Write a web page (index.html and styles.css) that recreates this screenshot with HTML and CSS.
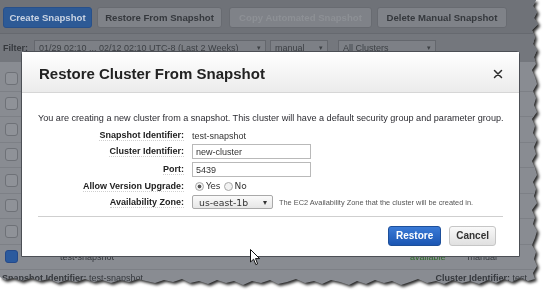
FILE: index.html
```html
<!DOCTYPE html>
<html lang="en">
<head>
    <meta charset="UTF-8">
    <title>Restore Cluster From Snapshot</title>
    <link rel="stylesheet" href="styles.css">
</head>
<body>
    <div class="shot">
        <div class="page">
            <div class="toolbar">
                <span class="btn btn-primary btn-create">Create Snapshot</span>
                <span class="btn btn-restore">Restore From Snapshot</span>
                <span class="btn btn-disabled btn-copy">Copy Automated Snapshot</span>
                <span class="btn btn-delete">Delete Manual Snapshot</span>
            </div>
            <div class="filters">
                <b>Filter:</b>
                <span class="fsel fsel-range">01/29 02:10 ... 02/12 02:10 UTC-8 (Last 2 Weeks) <i>▾</i></span>
                <span class="fsel fsel-type">manual <i>▾</i></span>
                <span class="fsel fsel-cluster">All Clusters <i>▾</i></span>
            </div>
            <div class="rows">
                <div class="row"><span class="check"></span></div>
                <div class="row"><span class="check"></span></div>
                <div class="row"><span class="check"></span></div>
                <div class="row"><span class="check"></span></div>
                <div class="row"><span class="check"></span></div>
                <div class="row"><span class="check"></span></div>
                <div class="row"><span class="check"></span></div>
                <div class="row selected">
                    <span class="check"></span>
                    <span class="cell-id">test-snapshot</span>
                    <span class="cell-status">available</span>
                    <span class="cell-type">manual</span>
                </div>
                <div class="details">
                    <span><b>Snapshot Identifier:</b> test-snapshot</span>
                    <span><b>Cluster Identifier:</b> test</span>
                </div>
            </div>

            <div class="modal">
                <div class="modal-head">
                    <h1>Restore Cluster From Snapshot</h1>
                    <svg class="close" width="10" height="10" viewBox="0 0 10 10">
                        <path d="M1.5 1.5 L8.5 8.5 M8.5 1.5 L1.5 8.5" stroke="#2b2b2b" stroke-width="1.5" stroke-linecap="round"/>
                    </svg>
                </div>
                <div class="modal-body">
                    <p class="intro">You are creating a new cluster from a snapshot. This cluster will have a default security group and parameter group.</p>
                    <div class="form">
                        <span class="label">Snapshot Identifier:</span>
                        <span class="value">test-snapshot</span>

                        <span class="label">Cluster Identifier:</span>
                        <span class="value"><span class="input">new-cluster</span></span>

                        <span class="label">Port:</span>
                        <span class="value"><span class="input">5439</span></span>

                        <span class="label">Allow Version Upgrade:</span>
                        <span class="value radios">
                            <span class="radio on"></span>Yes
                            <span class="radio"></span>No
                        </span>

                        <span class="label">Availability Zone:</span>
                        <span class="value zone">
                            <span class="select">us-east-1b <i>▾</i></span>
                            <span class="help">The EC2 Availability Zone that the cluster will be created in.</span>
                        </span>
                    </div>
                    <div class="actions">
                        <span class="mbtn mbtn-blue">Restore</span>
                        <span class="mbtn">Cancel</span>
                    </div>
                </div>
            </div>

            <svg class="cursor" width="11" height="17" viewBox="0 0 11 17">
                <path d="M0.5 0.5 L0.5 13 L3.6 10.2 L5.8 15.6 L7.6 14.8 L5.5 9.6 L9.6 9.6 Z" fill="#fff" stroke="#111" stroke-width="1"/>
            </svg>
        </div>
    </div>
</body>
</html>
```

FILE: styles.css
```css
body {
    margin: 0;
    background: #fff;
    font-family: "Liberation Sans", Arial, sans-serif;
}

/* torn-paper screenshot */
.shot {
    width: 545px;
    height: 293px;
    filter: drop-shadow(2px 2px 1.5px rgba(0, 0, 0, 0.85));
}

.page {
    position: relative;
    width: 540px;
    height: 288px;
    background: #898c92;
    overflow: hidden;
    clip-path: polygon(0 0, 536px 0, 533px 6px, 537px 12px, 534px 18px, 538px 24px, 532px 30px,
        535px 37px, 533px 44px, 537px 50px, 534px 57px, 536px 64px, 532px 70px, 535px 77px,
        537px 84px, 533px 91px, 536px 98px, 534px 105px, 537px 112px, 532px 119px, 535px 126px,
        533px 133px, 537px 140px, 534px 147px, 536px 154px, 532px 161px, 535px 168px, 537px 175px,
        533px 182px, 536px 189px, 534px 196px, 537px 203px, 532px 210px, 535px 217px, 533px 224px,
        537px 231px, 535px 238px, 532px 245px, 536px 252px, 534px 259px, 537px 266px, 533px 273px,
        535px 279px, 528px 281px, 520px 278px, 512px 282px, 504px 279px, 496px 283px, 488px 280px,
        479px 284px, 470px 281px, 462px 283px, 453px 280px, 444px 284px, 436px 281px, 427px 283px,
        418px 279px, 410px 282px, 401px 285px, 392px 281px, 384px 283px, 375px 280px, 366px 284px,
        357px 281px, 349px 285px, 340px 282px, 331px 280px, 322px 284px, 314px 281px, 305px 283px,
        296px 279px, 287px 282px, 278px 284px, 270px 280px, 261px 283px, 252px 281px, 243px 285px,
        234px 281px, 226px 283px, 217px 280px, 208px 284px, 199px 281px, 190px 283px, 182px 279px,
        173px 282px, 164px 280px, 155px 283px, 146px 281px, 138px 279px, 129px 282px, 120px 280px,
        111px 283px, 102px 280px, 94px 282px, 85px 279px, 76px 282px, 67px 280px, 58px 283px,
        49px 279px, 40px 281px, 31px 278px, 22px 281px, 13px 278px, 5px 280px, 0 277px);
}

.toolbar {
    display: flex;
    height: 34px;
    padding: 7px 3px 0;
    box-sizing: border-box;
    background: #6f7278;
    border-bottom: 1px solid #66696f;
}

.btn {
    height: 21px;
    line-height: 20px;
    border: 1px solid #686b71;
    border-radius: 3px;
    box-sizing: border-box;
    background: #7f8288;
    color: #35383d;
    font-size: 9.6px;
    font-weight: bold;
    text-align: center;
    white-space: nowrap;
}

.btn-create { width: 89px; }
.btn-restore { width: 125px; margin-left: 5px; }
.btn-copy { width: 143px; margin-left: 7px; }
.btn-delete { width: 130px; margin-left: 5px; }

.btn-primary {
    background: #2d5a96;
    border-color: #28508a;
    color: #c9d3e2;
}

.btn-disabled {
    color: #8d9095;
}

.filters {
    display: flex;
    align-items: center;
    gap: 4px;
    height: 28px;
    padding: 0 3px;
    background: #74777d;
    color: #35383d;
    font-size: 9px;
}

.filters b {
    margin-right: 2px;
}

.fsel {
    display: flex;
    justify-content: space-between;
    height: 14px;
    line-height: 14px;
    padding: 0 4px;
    border: 1px solid #64676d;
    background: #7d8086;
    color: #3d4045;
    font-size: 9px;
    white-space: nowrap;
}

.fsel i {
    font-style: normal;
    font-size: 7px;
}

.fsel-range { width: 222px; }
.fsel-type { width: 48px; }
.fsel-cluster { width: 88px; margin-left: 6px; }

.rows {
    padding-top: 4px;
}

.row {
    position: relative;
    display: flex;
    align-items: center;
    height: 25.5px;
    padding-left: 5px;
    border-bottom: 1px solid #7d8086;
    box-sizing: border-box;
    font-size: 9px;
    color: #35383d;
}

.check {
    width: 11px;
    height: 11px;
    border: 1px solid #6e7177;
    border-radius: 3px;
    background: #8f9298;
}

.selected .check {
    background: #2b5a9e;
    border-color: #24498a;
}

.cell-id { margin-left: 42px; }
.cell-status { margin-left: 296px; color: #2f6a2a; }
.cell-type { margin-left: 22px; }

.details {
    display: flex;
    justify-content: space-between;
    padding: 3px 8px 0 2px;
    font-size: 9px;
    color: #35383d;
    width: 525px;
}

/* dialog */
.modal {
    position: absolute;
    left: 21px;
    top: 51px;
    width: 499px;
    height: 206px;
    box-sizing: border-box;
    background: #fff;
    border: 1px solid #4c4f55;
    border-radius: 3px 3px 0 0;
}

.modal-head {
    display: flex;
    justify-content: space-between;
    align-items: center;
    height: 41px;
    padding: 3px 16px 0 17px;
    box-sizing: border-box;
    background: linear-gradient(#ffffff, #ebebeb);
    border-bottom: 1px solid #d6d6d6;
}

.modal-head h1 {
    margin: 0;
    font-size: 15px;
    color: #222;
}

.modal-body {
    padding: 19px 16px 0 16px;
}

.intro {
    margin: 0;
    font-size: 9.1px;
    line-height: 12px;
    color: #2d2d33;
    white-space: nowrap;
}

.form {
    display: grid;
    grid-template-columns: 146px auto;
    grid-template-rows: 11px 15px 15px 12px 14px;
    column-gap: 8px;
    row-gap: 3px;
    align-items: center;
    margin-top: 6px;
    font-size: 9px;
}

.label {
    justify-self: end;
    font-weight: bold;
    color: #222;
    line-height: 10px;
    border-bottom: 1px dotted #cfcfcf;
}

.value {
    display: flex;
    align-items: center;
    color: #333;
}

.input {
    width: 119px;
    height: 15px;
    line-height: 14px;
    padding: 0 3px;
    border: 1px solid #b9b9b9;
    box-sizing: border-box;
    background: #fff;
    color: #333;
}

.radios {
    font-family: "DejaVu Sans", sans-serif;
    font-size: 9px;
}

.radio {
    width: 7px;
    height: 7px;
    margin: 0 2px 0 3px;
    border: 1px solid #a8a8a8;
    border-radius: 50%;
    background: #f2f2f2;
    box-sizing: content-box;
}

.radio.on {
    background: radial-gradient(circle, #555 0 1.6px, #f2f2f2 2.2px);
}

.zone {
    gap: 6px;
}

.select {
    display: flex;
    justify-content: space-between;
    align-items: center;
    width: 81px;
    height: 14px;
    padding: 0 5px 0 6px;
    box-sizing: border-box;
    border: 1px solid #a9a9a9;
    border-radius: 2px;
    background: linear-gradient(#fafafa, #e6e6e6);
    font-family: "DejaVu Sans", sans-serif;
    font-size: 9.3px;
    color: #333;
}

.select i {
    font-style: normal;
    font-size: 8px;
}

.help {
    font-size: 7.4px;
    color: #555;
}

.actions {
    display: flex;
    justify-content: flex-end;
    gap: 8px;
    margin-top: 7px;
    padding: 9px 7px 0 0;
    border-top: 1px solid #cfcfcf;
}

.mbtn {
    height: 20px;
    line-height: 18px;
    padding: 0 6px;
    box-sizing: border-box;
    border: 1px solid #c6c6c6;
    border-radius: 3px;
    background: linear-gradient(#f9f9f9, #e0e0e0);
    color: #333;
    font-size: 10px;
    font-weight: bold;
}

.mbtn-blue {
    padding: 0 7px;
    border-color: #1d4f9a;
    background: linear-gradient(#3a7ad6, #1b56b3);
    color: #fff;
}

.cursor {
    position: absolute;
    left: 250px;
    top: 249px;
}
```
